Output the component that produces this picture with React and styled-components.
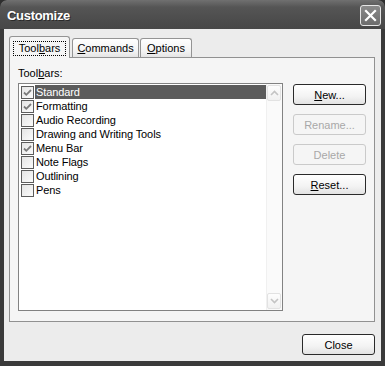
import React from "react";
import styled, { createGlobalStyle } from "styled-components";

const GlobalStyle = createGlobalStyle`
  html, body {
    margin: 0;
    padding: 0;
    background: #2e2e2e;
  }
  body {
    font-family: "Liberation Sans", Arial, sans-serif;
    font-size: 11px;
  }
`;

const toolbars = [
  { name: "Standard", checked: true, selected: true },
  { name: "Formatting", checked: true },
  { name: "Audio Recording" },
  { name: "Drawing and Writing Tools" },
  { name: "Menu Bar", checked: true },
  { name: "Note Flags" },
  { name: "Outlining" },
  { name: "Pens" },
];

const App = () => {
  return (
    <>
      <GlobalStyle />
      <Window>
        <TitleBar>
          <Title>Customize</Title>
          <CloseBox>
            <svg width="13" height="13" viewBox="0 0 13 13">
              <path
                d="M2 2 L11 11 M11 2 L2 11"
                stroke="#fff"
                strokeWidth="2.2"
                strokeLinecap="square"
              />
            </svg>
          </CloseBox>
        </TitleBar>
        <Client>
          <Tabs>
            <Tab $active $w={61}>
              <FocusRing>
                Tool<u>b</u>ars
              </FocusRing>
            </Tab>
            <Tab $w={67}>
              <u>C</u>ommands
            </Tab>
            <Tab $w={52}>
              <u>O</u>ptions
            </Tab>
          </Tabs>
          <Panel>
            <Label>
              Tool<u>b</u>ars:
            </Label>
            <Body>
              <ListBox>
                <Rows>
                  {toolbars.map((t) => (
                    <Row key={t.name}>
                      <CheckBox>
                        {t.checked && (
                          <svg width="11" height="11" viewBox="0 0 11 11">
                            <path
                              d="M2 5.5 L4.3 7.8 L9 3"
                              fill="none"
                              stroke="#7b7b7b"
                              strokeWidth="1.8"
                            />
                          </svg>
                        )}
                      </CheckBox>
                      <ItemText $selected={t.selected}>{t.name}</ItemText>
                    </Row>
                  ))}
                </Rows>
                <ScrollBar>
                  <ScrollButton>
                    <svg width="9" height="6" viewBox="0 0 9 6">
                      <path d="M1 5 L4.5 1.5 L8 5" fill="none" stroke="#c4c4c4" strokeWidth="1.6" />
                    </svg>
                  </ScrollButton>
                  <ScrollButton>
                    <svg width="9" height="6" viewBox="0 0 9 6">
                      <path d="M1 1 L4.5 4.5 L8 1" fill="none" stroke="#c4c4c4" strokeWidth="1.6" />
                    </svg>
                  </ScrollButton>
                </ScrollBar>
              </ListBox>
              <Buttons>
                <Button>
                  <u>N</u>ew...
                </Button>
                <Button disabled>Rename...</Button>
                <Button disabled>Delete</Button>
                <Button>
                  <u>R</u>eset...
                </Button>
              </Buttons>
            </Body>
          </Panel>
          <Footer>
            <Button>Close</Button>
          </Footer>
        </Client>
      </Window>
    </>
  );
};

const Window = styled.div`
  width: 385px;
  height: 366px;
  box-sizing: border-box;
  background: #3a3a3a;
  border-radius: 7px 7px 0 0;
  display: flex;
  flex-direction: column;
  overflow: hidden;
`;

const TitleBar = styled.div`
  height: 29px;
  flex: 0 0 auto;
  display: flex;
  align-items: center;
  justify-content: space-between;
  padding: 0 4px 0 7px;
  background: linear-gradient(#707070, #555555 25%, #4c4c4c 70%, #474747);
  border-radius: 7px 7px 0 0;
`;

const Title = styled.div`
  color: #fff;
  font-weight: bold;
  font-size: 13px;
  letter-spacing: -0.3px;
  text-shadow: 1px 1px 0 #2a2a2a;
  padding-top: 2px;
`;

const CloseBox = styled.div`
  width: 21px;
  height: 21px;
  box-sizing: border-box;
  border: 1px solid #e6e6e6;
  border-radius: 3px;
  background: linear-gradient(#8a8a8a, #6c6c6c);
  display: flex;
  align-items: center;
  justify-content: center;
  margin-top: 2px;
`;

const Client = styled.div`
  flex: 1 1 auto;
  margin: 0 4px 5px 4px;
  background: #ececec;
  display: flex;
  flex-direction: column;
  padding-top: 7px;
`;

const Tabs = styled.div`
  display: flex;
  align-items: flex-end;
  gap: 1px;
  padding-left: 5px;
  margin-bottom: -1px;
  position: relative;
  z-index: 1;
  height: 22px;
`;

const Tab = styled.div`
  width: ${(p) => p.$w}px;
  height: ${(p) => (p.$active ? 22 : 20)}px;
  box-sizing: border-box;
  display: flex;
  align-items: center;
  justify-content: center;
  border: 1px solid #949494;
  border-bottom: ${(p) => (p.$active ? "none" : "1px solid #919191")};
  border-radius: 3px 3px 0 0;
  background: ${(p) =>
    p.$active ? "#f5f5f5" : "linear-gradient(#ffffff, #f2f2f2 70%, #e4e4e4)"};
  color: #000;
  padding-top: ${(p) => (p.$active ? 1 : 0)}px;
  margin-right: ${(p) => (p.$active ? 1 : 0)}px;
`;

const FocusRing = styled.span`
  height: 15px;
  box-sizing: border-box;
  width: 53px;
  border: 1px dotted #000;
  display: flex;
  align-items: center;
  justify-content: center;
`;

const Panel = styled.div`
  height: 265px;
  box-sizing: border-box;
  margin: 0 6px 0 5px;
  border: 1px solid #919191;
  background: #f5f5f5;
  padding: 9px 0 0 8px;
  display: flex;
  flex-direction: column;
`;

const Label = styled.div`
  line-height: 13px;
  margin-bottom: 3px;
`;

const Body = styled.div`
  display: flex;
  gap: 10px;
`;

const ListBox = styled.div`
  width: 265px;
  height: 228px;
  box-sizing: border-box;
  border: 1px solid #828282;
  background: #fff;
  display: flex;
`;

const Rows = styled.div`
  flex: 1;
  padding: 1px 0 0 2px;
  display: flex;
  flex-direction: column;
`;

const Row = styled.div`
  height: 14px;
  display: flex;
  align-items: center;
`;

const CheckBox = styled.span`
  width: 13px;
  height: 13px;
  box-sizing: border-box;
  border: 1px solid #5c5c5c;
  background: linear-gradient(135deg, #e4e4e4, #fbfbfb);
  display: flex;
  align-items: center;
  justify-content: center;
  margin-right: 1px;
`;

const ItemText = styled.span`
  flex: 1;
  height: 14px;
  line-height: 14px;
  padding-left: 1px;
  letter-spacing: -0.1px;
  white-space: nowrap;
  background: ${(p) => (p.$selected ? "#5b5b5b" : "transparent")};
  color: ${(p) => (p.$selected ? "#fff" : "#000")};
`;

const ScrollBar = styled.div`
  width: 16px;
  padding: 1px 1px 1px 0;
  box-sizing: border-box;
  background: #fafafa;
  border-left: 1px solid #f0f0f0;
  display: flex;
  flex-direction: column;
  justify-content: space-between;
`;

const ScrollButton = styled.div`
  height: 16px;
  box-sizing: border-box;
  border: 1px solid #e2e2e2;
  border-radius: 2px;
  background: linear-gradient(#fdfdfd, #f1f1f1);
  display: flex;
  align-items: center;
  justify-content: center;
`;

const Buttons = styled.div`
  display: flex;
  flex-direction: column;
  gap: 9px;
  padding-top: 1px;
`;

const Button = styled.button`
  width: 73px;
  height: 21px;
  box-sizing: border-box;
  padding: 0;
  font-family: "Liberation Sans", Arial, sans-serif;
  font-size: 11px;
  color: #000;
  border: 1px solid #2a2a2a;
  border-radius: 3px;
  background: linear-gradient(#ffffff, #f3f3f3 60%, #e2e2e2);
  &:disabled {
    color: #a8a8a8;
    border-color: #cacaca;
    background: #f5f5f5;
  }
`;

const Footer = styled.div`
  display: flex;
  justify-content: flex-end;
  padding: 12px 6px 0 0;
`;

export default App;
